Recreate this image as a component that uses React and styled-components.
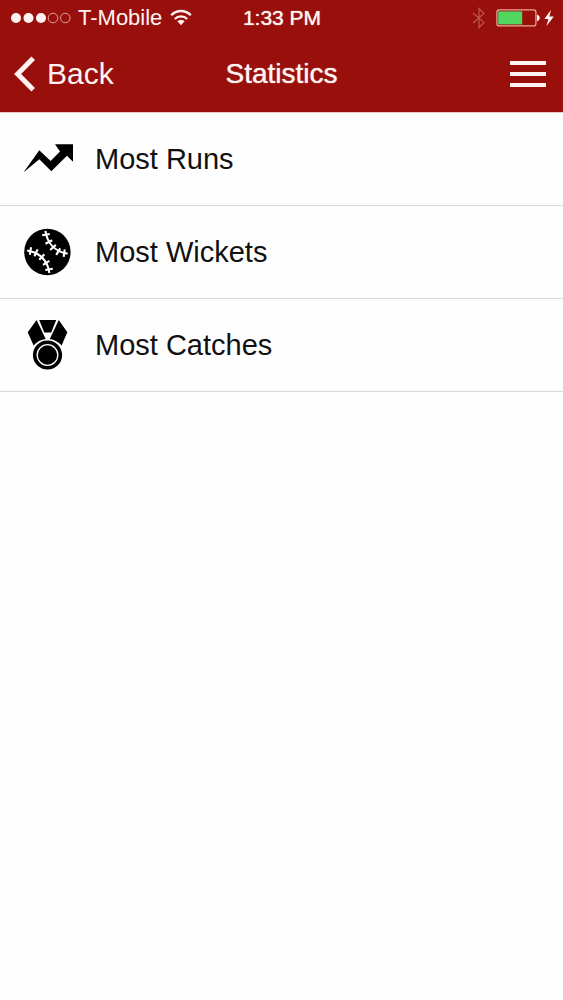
import styled, { createGlobalStyle } from "styled-components";

const GlobalStyle = createGlobalStyle`
  body {
    margin: 0;
    background: #fefefe;
    color: #111;
    font-family: "Liberation Sans", Arial, Helvetica, sans-serif;
  }
`;

const Header = styled.header`
  color: #fff4f2;
  background: #990f0b;
`;

const StatusBar = styled.div`
  display: grid;
  grid-template-columns: 1fr auto 1fr;
  align-items: center;
  height: 36px;
  padding: 0 9px 0 10px;

  font-size: 21px;
  line-height: 24px;
`;

const StatusGroup = styled.div`
  display: flex;
  align-items: center;
  justify-content: ${({ $end }) => ($end ? "flex-end" : "flex-start")};
  gap: ${({ $end }) => ($end ? "10px" : "8px")};
`;

const Carrier = styled.span`
  font-size: 22px;
`;

const Time = styled.time`
  text-shadow: 0 0 1px #fff4f2;
`;

const NavBar = styled.nav`
  display: grid;
  grid-template-columns: 1fr auto 1fr;
  align-items: center;
  height: 76px;
  padding: 0 17px;
`;

const BackLink = styled.a`
  display: flex;
  align-items: center;
  gap: 11px;

  color: inherit;
  font-size: 30px;
  line-height: 36px;
  text-decoration: none;
`;

const Title = styled.h1`
  margin: 0;

  font-size: 28px;
  font-weight: normal;
  line-height: 36px;
  text-shadow: 0 0 1px #fff4f2;
`;

const MenuButton = styled.button`
  display: flex;
  flex-direction: column;
  justify-self: end;
  gap: 7px;
  padding: 0;

  background: none;
  border: 0;
  cursor: pointer;
`;

const MenuLine = styled.span`
  width: 36px;
  height: 4px;
  background: #fff4f2;
`;

const List = styled.ul`
  margin: 0;
  padding: 0;
  border-top: 1px solid #eec9c6;
  list-style: none;
`;

const Row = styled.li`
  border-bottom: 1px solid #d9d9db;
`;

const RowLink = styled.a`
  display: flex;
  align-items: center;
  gap: 21px;
  height: 92px;
  padding: 0 22px;

  color: inherit;
  font-size: 29px;
  line-height: 36px;
  text-decoration: none;
`;

const Icon = styled.svg`
  display: block;
  flex: none;
  overflow: visible;
`;

const SignalIcon = () => (
  <Icon width="60" height="12" viewBox="0 0 60 12" aria-hidden="true">
    <g fill="#fff4f2">
      <circle cx="6" cy="6" r="5" />
      <circle cx="18.5" cy="6" r="5" />
      <circle cx="31" cy="6" r="5" />
    </g>
    <g fill="none" stroke="#e2a09a" strokeWidth="1">
      <circle cx="43" cy="6" r="4.8" />
      <circle cx="55.3" cy="6" r="4.8" />
    </g>
  </Icon>
);

const WifiIcon = () => (
  <Icon width="22" height="18" viewBox="0 0 22 18" aria-hidden="true">
    <g fill="none" stroke="#fff4f2" strokeWidth="2.3">
      <path d="M1.2 6.2 C6.5 .6 15.5 .6 20.8 6.2" />
      <path d="M4.8 10 C8.2 6.6 13.8 6.6 17.2 10" />
    </g>
    <path d="M7.4 12.3 C9.4 10.5 12.6 10.5 14.6 12.3 L11 16.2Z" fill="#fff4f2" />
  </Icon>
);

const BluetoothIcon = () => (
  <Icon width="14" height="22" viewBox="0 0 14 22" aria-hidden="true">
    <path d="M1 6 12 15.5 7 20.5V1.5L12 6.5 1 16" fill="none" stroke="#b9564e" strokeWidth="1.2" />
  </Icon>
);

const BatteryIcon = () => (
  <Icon width="58" height="18" viewBox="0 0 58 18" aria-hidden="true">
    <rect x=".9" y=".9" width="39" height="16" rx="2.2" fill="none" stroke="#eba99d" strokeWidth="1.2" />
    <rect x="2.2" y="2.4" width="24" height="13" fill="#50d75f" />
    <path d="M41 5.6 Q43.8 6.6 43.8 9 Q43.8 11.4 41 12.4Z" fill="#fff4f2" />
    <path d="M55 .8 48.4 10H52.4L50.4 17.2 57.8 7.4H53.4Z" fill="#fff4f2" />
  </Icon>
);

const BackIcon = () => (
  <Icon width="19" height="36" viewBox="3 0 19 36" aria-hidden="true">
    <path d="M19.2 2.2 3.6 18 19.2 33.8" fill="none" stroke="#fff4f2" strokeWidth="5" />
  </Icon>
);

const RunsIcon = () => (
  <Icon width="52" height="52" viewBox="0 0 52 52" aria-hidden="true">
    <path d="M1.4 39.6 17.3 17.2 28.6 28 38 18.6 33 11.2H51V28.8L45 22.8 29.3 38.2 17.3 26.2Z" />
  </Icon>
);

// each stitch is [x, y, angle of the seam]
const stitches = [
  [24, 8.6, 80],
  [26.8, 16, 62],
  [31, 21.4, 48],
  [36.2, 25.6, 32],
  [42.2, 27.2, 8],
  [8.4, 25, 10],
  [14, 26.8, 25],
  [19.8, 31, 42],
  [24.2, 36.8, 58],
  [27, 43.4, 80],
];

const WicketsIcon = () => (
  <Icon width="52" height="52" viewBox="0 0 52 52" aria-hidden="true">
    <circle cx="25.4" cy="26" r="23.2" />
    <g fill="none" stroke="#fff" strokeWidth="2.1">
      <path d="M23.4 4.8C25 15.5 31.5 25.5 45.6 27.6" />
      <path d="M5 24.5C18 26.5 25.5 34.5 27.4 47" />
      {stitches.map(([x, y, angle]) => (
        <path
          key={`${x}-${y}`}
          d="M0 -3.8V3.8"
          transform={`translate(${x} ${y}) rotate(${angle})`}
        />
      ))}
    </g>
  </Icon>
);

const CatchesIcon = () => (
  <Icon width="52" height="52" viewBox="0 0 52 52" aria-hidden="true">
    <path d="M14.6 1 5.7 13.2 11.6 26.5 Q16.5 20.8 23.7 20Z" />
    <path d="M17.2 1H34.2L29.2 13.5H22.3Z" />
    <path d="M36.8 1 45.3 13.2 39.6 26.5 Q34.8 21.2 27.8 20Z" />
    <circle cx="25.5" cy="36" r="14.6" />
    <circle cx="25.5" cy="36" r="10.3" fill="none" stroke="#fff" strokeWidth="1.3" />
  </Icon>
);

const items = [
  { label: "Most Runs", icon: RunsIcon },
  { label: "Most Wickets", icon: WicketsIcon },
  { label: "Most Catches", icon: CatchesIcon },
];

const App = () => {
  return (
    <>
      <GlobalStyle />
      <Header>
        <StatusBar>
          <StatusGroup>
            <SignalIcon />
            <Carrier>T-Mobile</Carrier>
            <WifiIcon />
          </StatusGroup>
          <Time>1:33 PM</Time>
          <StatusGroup $end>
            <BluetoothIcon />
            <BatteryIcon />
          </StatusGroup>
        </StatusBar>
        <NavBar>
          <BackLink href="#back">
            <BackIcon />
            Back
          </BackLink>
          <Title>Statistics</Title>
          <MenuButton type="button" aria-label="Menu">
            <MenuLine />
            <MenuLine />
            <MenuLine />
          </MenuButton>
        </NavBar>
      </Header>
      <main>
        <List>
          {items.map(({ label, icon: ItemIcon }) => (
            <Row key={label}>
              <RowLink href="#stats">
                <ItemIcon />
                {label}
              </RowLink>
            </Row>
          ))}
        </List>
      </main>
    </>
  );
};

export default App;
